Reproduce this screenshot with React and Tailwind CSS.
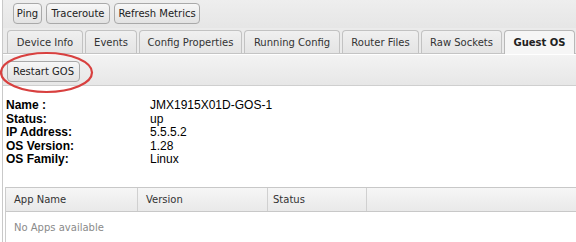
import React from "react";

const tahoma = "font-['DejaVu_Sans',sans-serif] text-[10px]";

function Btn({ children, w }) {
  return (
    <div
      className={`h-[21px] flex items-center justify-center rounded-[4px] border border-[#a9a9a9] bg-gradient-to-b from-[#f7f7f7] to-[#e2e2e2] text-[#222] ${tahoma}`}
      style={{ width: w }}
    >
      {children}
    </div>
  );
}

function Tab({ children, w, active }) {
  return (
    <div
      className={`h-[23px] flex items-center justify-center rounded-t-[4px] border border-b-0 ${
        active
          ? "border-[#b8b8b8] bg-[#f6f6f6] font-bold text-[#222] h-[24px] -mb-[1px]"
          : "border-[#c2c2c2] bg-gradient-to-b from-[#f0f0f0] to-[#e4e4e4] text-[#333]"
      } ${tahoma}`}
      style={{ width: w }}
    >
      {children}
    </div>
  );
}

export default function App() {
  const rows = [
    ["Name :", "JMX1915X01D-GOS-1"],
    ["Status:", "up"],
    ["IP Address:", "5.5.5.2"],
    ["OS Version:", "1.28"],
    ["OS Family:", "Linux"],
  ];
  return (
    <div className="w-[576px] h-[242px] overflow-hidden bg-white relative">
      <div className="ml-[2px] border-l border-[#c9c9c9] h-full flex flex-col">
        {/* top toolbar */}
        <div className="h-[28px] flex items-start gap-[4px] pl-[10px] pt-[3px] bg-gradient-to-b from-[#eeeeee] to-[#e6e6e6]">
          <Btn w={29}>Ping</Btn>
          <Btn w={64}>Traceroute</Btn>
          <Btn w={86}>Refresh Metrics</Btn>
        </div>
        {/* tab strip */}
        <div className="h-[27px] flex items-end gap-[2px] pl-[4px] bg-[#ebebeb] border-b border-[#c4c4c4]">
          <Tab w={76}>Device Info</Tab>
          <Tab w={52}>Events</Tab>
          <Tab w={103}>Config Properties</Tab>
          <Tab w={96}>Running Config</Tab>
          <Tab w={77}>Router Files</Tab>
          <Tab w={81}>Raw Sockets</Tab>
          <Tab w={71} active>Guest OS</Tab>
        </div>
        {/* sub toolbar */}
        <div className="h-[32px] flex items-start pl-[4px] pt-[6px] bg-gradient-to-b from-[#f3f3f3] to-[#e7e7e7] border-t border-white border-b border-b-[#cfcfcf]">
          <Btn w={73}>Restart GOS</Btn>
        </div>
        {/* content */}
        <div className="flex-1 bg-white pt-[13px]">
          <div className="pl-[3px] font-['Liberation_Sans',Arial,sans-serif] text-[12px] leading-[13.6px] text-black">
            {rows.map(([k, v]) => (
              <div key={k} className="flex">
                <div className="w-[144px] font-bold">{k}</div>
                <div>{v}</div>
              </div>
            ))}
          </div>
          <div className="mt-[20px] ml-[2px] border-l border-[#cccccc]">
            <div className={`h-[25px] flex items-center border-t border-b border-[#c8c8c8] bg-gradient-to-b from-[#f6f6f6] to-[#e9e9e9] text-[#333] ${tahoma}`}>
              <div className="w-[132px] h-full flex items-center pl-[8px] border-r border-[#d0d0d0]">App Name</div>
              <div className="w-[130px] h-full flex items-center pl-[8px] border-r border-[#d0d0d0]">Version</div>
              <div className="w-[99px] h-full flex items-center pl-[5px] border-r border-[#d0d0d0]">Status</div>
              <div className="flex-1 h-full"></div>
            </div>
            <div className={`h-[30px] flex items-center pl-[8px] text-[#8a8a8a] ${tahoma}`}>
              No Apps available
            </div>
          </div>
        </div>
      </div>
      {/* annotation ellipse */}
      <svg className="absolute left-0 top-0 pointer-events-none" width="576" height="242">
        <ellipse cx="46.5" cy="72.5" rx="45.5" ry="19.5" fill="none" stroke="#d8403f" strokeWidth="2.2" />
      </svg>
    </div>
  );
}
